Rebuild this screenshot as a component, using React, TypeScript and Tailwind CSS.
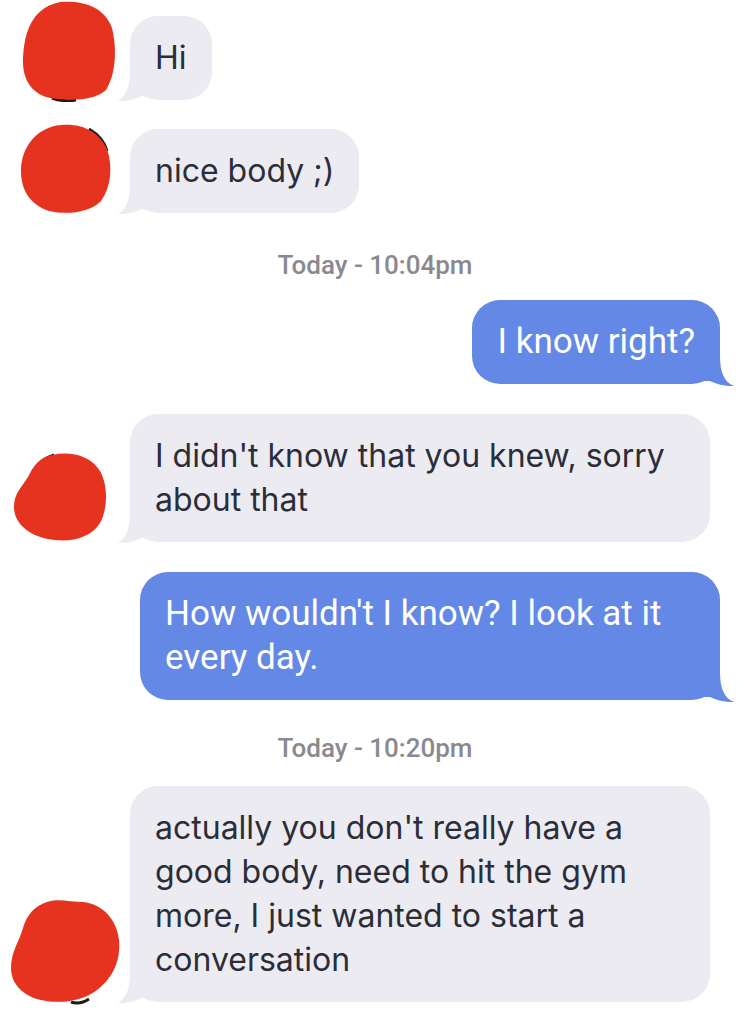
import React from "react";

const GREY = "#ebebf1";
const BLUE = "#6388e6";

function Avatar({ variant }: { variant: number }) {
  const shapes: Record<number, { w: number; h: number; d: string; edge?: string }> = {
    1: {
      w: 96,
      h: 102,
      d: "M40 2 C62 0 84 6 92 28 C97 48 96 74 86 90 C74 101 50 101 30 98 C12 94 2 80 3 58 C4 36 10 8 40 2 Z",
      edge: "M32 98 C40 101 50 101 56 100",
    },
    2: {
      w: 94,
      h: 92,
      d: "M42 2 C62 0 80 8 88 26 C94 44 92 64 82 78 C70 90 48 92 30 88 C12 82 2 68 2 48 C2 24 18 4 42 2 Z",
      edge: "M70 6 C80 12 86 20 88 28",
    },
    3: {
      w: 98,
      h: 92,
      d: "M40 4 C58 0 78 4 88 20 C96 34 96 58 88 72 C78 88 56 92 36 88 C16 84 2 72 2 56 C2 42 10 36 16 26 C22 14 28 6 40 4 Z",
      edge: "M20 22 C26 12 32 7 42 4",
    },
    4: {
      w: 112,
      h: 108,
      d: "M38 4 C48 0 62 4 74 4 C94 6 108 22 110 42 C112 62 104 80 88 92 C72 104 50 106 32 102 C14 98 2 86 2 70 C2 54 10 44 14 30 C18 16 26 8 38 4 Z",
      edge: "M62 104 C68 106 74 105 80 101",
    },
  };
  const s = shapes[variant];
  return (
    <svg width={s.w} height={s.h} viewBox={`0 0 ${s.w} ${s.h}`} className="shrink-0 block">
      {s.edge && <path d={s.edge} stroke="#1f1a1a" strokeWidth="3" fill="none" />}
      <path d={s.d} fill="#e5331f" />
    </svg>
  );
}

function GreyTail() {
  return (
    <svg width="30" height="30" viewBox="0 0 30 30" className="absolute left-[-12px] bottom-[-1px]">
      <path d="M12 0 C12 16 8 25 0 30 C10 30 18 28 24 25 L30 25 L30 0 Z" fill={GREY} />
    </svg>
  );
}

function BlueTail() {
  return (
    <svg width="30" height="30" viewBox="0 0 30 30" className="absolute right-[-14px] bottom-[-2px]">
      <path d="M16 0 C16 16 20 26 30 30 C20 30 12 28 6 25 L0 25 L0 0 Z" fill={BLUE} />
    </svg>
  );
}

function Incoming({
  avatar,
  children,
  avatarBox,
}: {
  avatar: number;
  children: React.ReactNode;
  avatarBox: string;
}) {
  return (
    <div className="flex items-end">
      <div className={avatarBox}>
        <Avatar variant={avatar} />
      </div>
      <div
        className="relative rounded-[28px] px-[25px] py-[20px] text-[32px] leading-[44px] text-[#2b2e38] max-w-[580px]"
        style={{ background: GREY, fontFamily: "Inter, 'Noto Sans', sans-serif" }}
      >
        <GreyTail />
        <span className="relative">{children}</span>
      </div>
    </div>
  );
}

function Outgoing({ children }: { children: React.ReactNode }) {
  return (
    <div className="flex justify-end pr-[30px]">
      <div
        className="relative rounded-[28px] px-[25px] py-[20px] text-[35px] leading-[44px] text-white max-w-[580px]"
        style={{ background: BLUE, fontFamily: "Roboto, 'Noto Sans', sans-serif" }}
      >
        <BlueTail />
        <span className="relative">{children}</span>
      </div>
    </div>
  );
}

function Stamp({ children }: { children: React.ReactNode }) {
  return (
    <div
      className="text-center text-[26px] leading-[28px] font-medium text-[#8a8a8e]"
      style={{ fontFamily: "Roboto, 'Noto Sans', sans-serif" }}
    >
      {children}
    </div>
  );
}

export default function App() {
  return (
    <div className="w-[750px] h-[1020px] bg-white overflow-hidden">
      <div className="flex flex-col">
        <Incoming avatar={1} avatarBox="w-[130px] pl-[20px] flex items-end mb-[-2px]">
          Hi
        </Incoming>
        <div className="mt-[23px]">
          <Incoming avatar={2} avatarBox="w-[130px] pl-[19px] flex items-end mb-[-2px]">
            nice body ;)
          </Incoming>
        </div>
        <div className="mt-[38px]">
          <Stamp>Today - 10:04pm</Stamp>
        </div>
        <div className="mt-[21px]">
          <Outgoing>I know right?</Outgoing>
        </div>
        <div className="mt-[30px] pr-[40px]">
          <Incoming avatar={3} avatarBox="w-[130px] pl-[12px] flex items-end mb-[-1px]">
            I didn't know that you knew, sorry about that
          </Incoming>
        </div>
        <div className="mt-[30px]">
          <Outgoing>How wouldn't I know? I look at it every day.</Outgoing>
        </div>
        <div className="mt-[34px]">
          <Stamp>Today - 10:20pm</Stamp>
        </div>
        <div className="mt-[24px] pr-[40px]">
          <Incoming avatar={4} avatarBox="w-[130px] pl-[9px] flex items-end mb-[-4px]">
            actually you don't really have a good body, need to hit the gym more, I just wanted to
            start a conversation
          </Incoming>
        </div>
      </div>
    </div>
  );
}
